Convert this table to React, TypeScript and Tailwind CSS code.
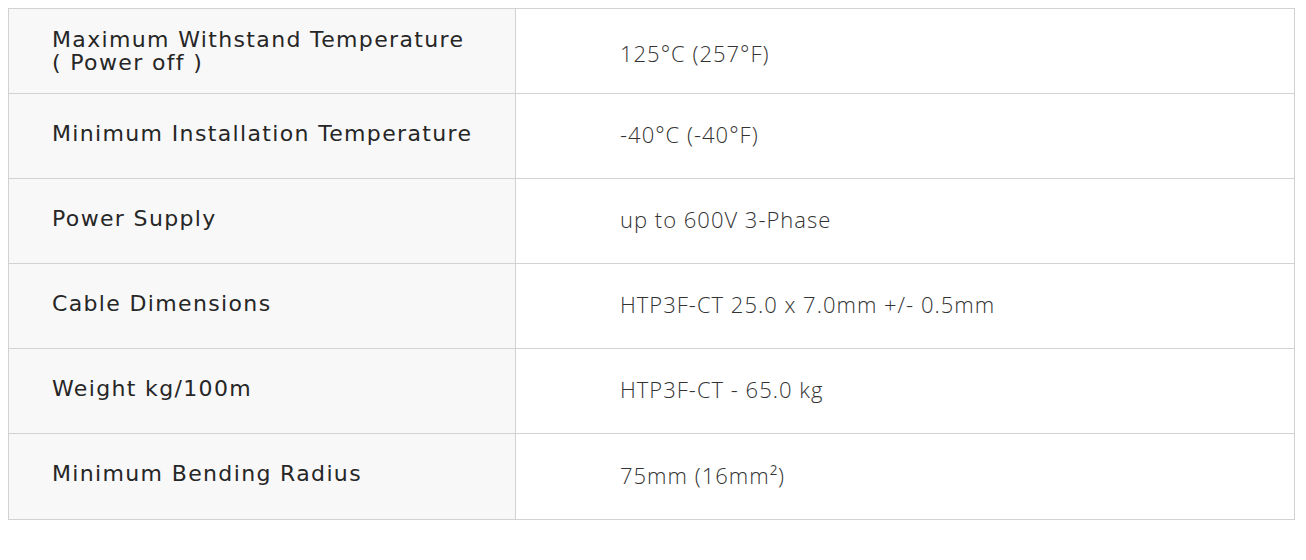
import React from "react";

const rows: { label: React.ReactNode; value: React.ReactNode; two?: boolean }[] = [
  {
    label: (
      <>
        Maximum Withstand Temperature
        <br />( Power off )
      </>
    ),
    value: "125°C (257°F)",
    two: true,
  },
  { label: "Minimum Installation Temperature", value: "-40°C (-40°F)" },
  { label: "Power Supply", value: "up to 600V 3-Phase" },
  { label: "Cable Dimensions", value: "HTP3F-CT 25.0 x 7.0mm +/- 0.5mm" },
  { label: "Weight kg/100m", value: "HTP3F-CT - 65.0 kg" },
  { label: "Minimum Bending Radius", value: "75mm (16mm²)" },
];

export default function App() {
  return (
    <div className="w-[1306px] h-[560px] bg-white p-2">
      <div className="w-[1287px] border border-[#d2d2d2]">
        {rows.map((r, i) => (
          <div
            key={i}
            className={`grid grid-cols-[507px_1fr] h-[85px] ${i < rows.length - 1 ? "border-b border-[#d2d2d2]" : ""}`}
          >
            <div
              className={`bg-[#f8f8f8] border-r border-[#d2d2d2] pl-[43px] flex items-center text-[22px] text-[#262626] tracking-[1.35px] ${r.two ? "leading-[23px]" : "leading-[22px] pb-[5px]"}`}
              style={{ fontFamily: "'DejaVu Sans', sans-serif" }}
            >
              <div>{r.label}</div>
            </div>
            <div
              className={`pl-[104px] flex items-center text-[22px] font-light text-[#333333] tracking-[1px] ${r.two ? "pt-[4px]" : "pb-[3px]"}`}
              style={{ fontFamily: "'Open Sans', sans-serif" }}
            >
              <div>{r.value}</div>
            </div>
          </div>
        ))}
      </div>
    </div>
  );
}
